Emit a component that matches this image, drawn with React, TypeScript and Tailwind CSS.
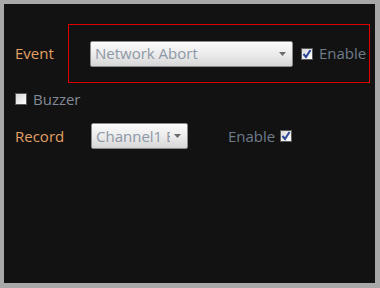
const font = { fontFamily: '"Open Sans", "DejaVu Sans", sans-serif' };

const Arrow = () => (
  <svg width="7" height="4" viewBox="0 0 7 4" className="shrink-0">
    <path d="M0 0 H7 L3.5 4 Z" fill="#6b6b6b" />
  </svg>
);

const Select = ({ value, w }: { value: string; w: string }) => (
  <div
    className={`${w} h-[26px] shrink-0 flex items-center gap-[4px] pl-[4px] pr-[6px] rounded-[2px] border border-[#8a8a8a] bg-gradient-to-b from-[#fbfbfb] via-[#ececec] to-[#d6d6d6] shadow-[inset_0_1px_0_#ffffff]`}
  >
    <span className="flex-1 overflow-hidden whitespace-nowrap text-[15px] leading-none text-[#8d98a6]">{value}</span>
    <Arrow />
  </div>
);

const Check = ({ checked }: { checked?: boolean }) => (
  <div className="w-[12px] h-[12px] shrink-0 border border-[#5a5a5a] bg-gradient-to-br from-[#d8d8d8] to-[#ffffff] flex items-center justify-center">
    {checked && (
      <svg width="10" height="10" viewBox="0 0 10 10">
        <path d="M1.5 5 L4 8 L8.5 1" stroke="#2d4596" strokeWidth="2" fill="none" />
      </svg>
    )}
  </div>
);

export default function App() {
  return (
    <div className="w-[380px] h-[288px] bg-[#a8a8a8] pl-[4px] pt-[4px]" style={font}>
      <div className="w-[371px] h-[279px] bg-[#121212] pl-[11px] pt-[20px]">
        <div className="flex items-center">
          <span className="w-[53px] text-[15px] text-[#e3a064]">Event</span>
          <div className="w-[302px] h-[59px] border border-[#e00000] flex items-center pl-[21px]">
            <Select value="Network Abort" w="w-[203px]" />
            <div className="ml-[8px]"><Check checked /></div>
            <span className="ml-[6px] text-[15px] text-[#6e7c8a]">Enable</span>
          </div>
        </div>
        <div className="flex items-center mt-[8px] h-[16px]">
          <Check />
          <span className="ml-[6px] text-[15px] text-[#818a94]">Buzzer</span>
        </div>
        <div className="flex items-center mt-[16px]">
          <span className="w-[76px] text-[15px] text-[#e3a064]">Record</span>
          <Select value="Channel1 Event" w="w-[97px]" />
          <span className="ml-[40px] text-[15px] text-[#6e7c8a]">Enable</span>
          <div className="ml-[5px]"><Check checked /></div>
        </div>
      </div>
    </div>
  );
}
